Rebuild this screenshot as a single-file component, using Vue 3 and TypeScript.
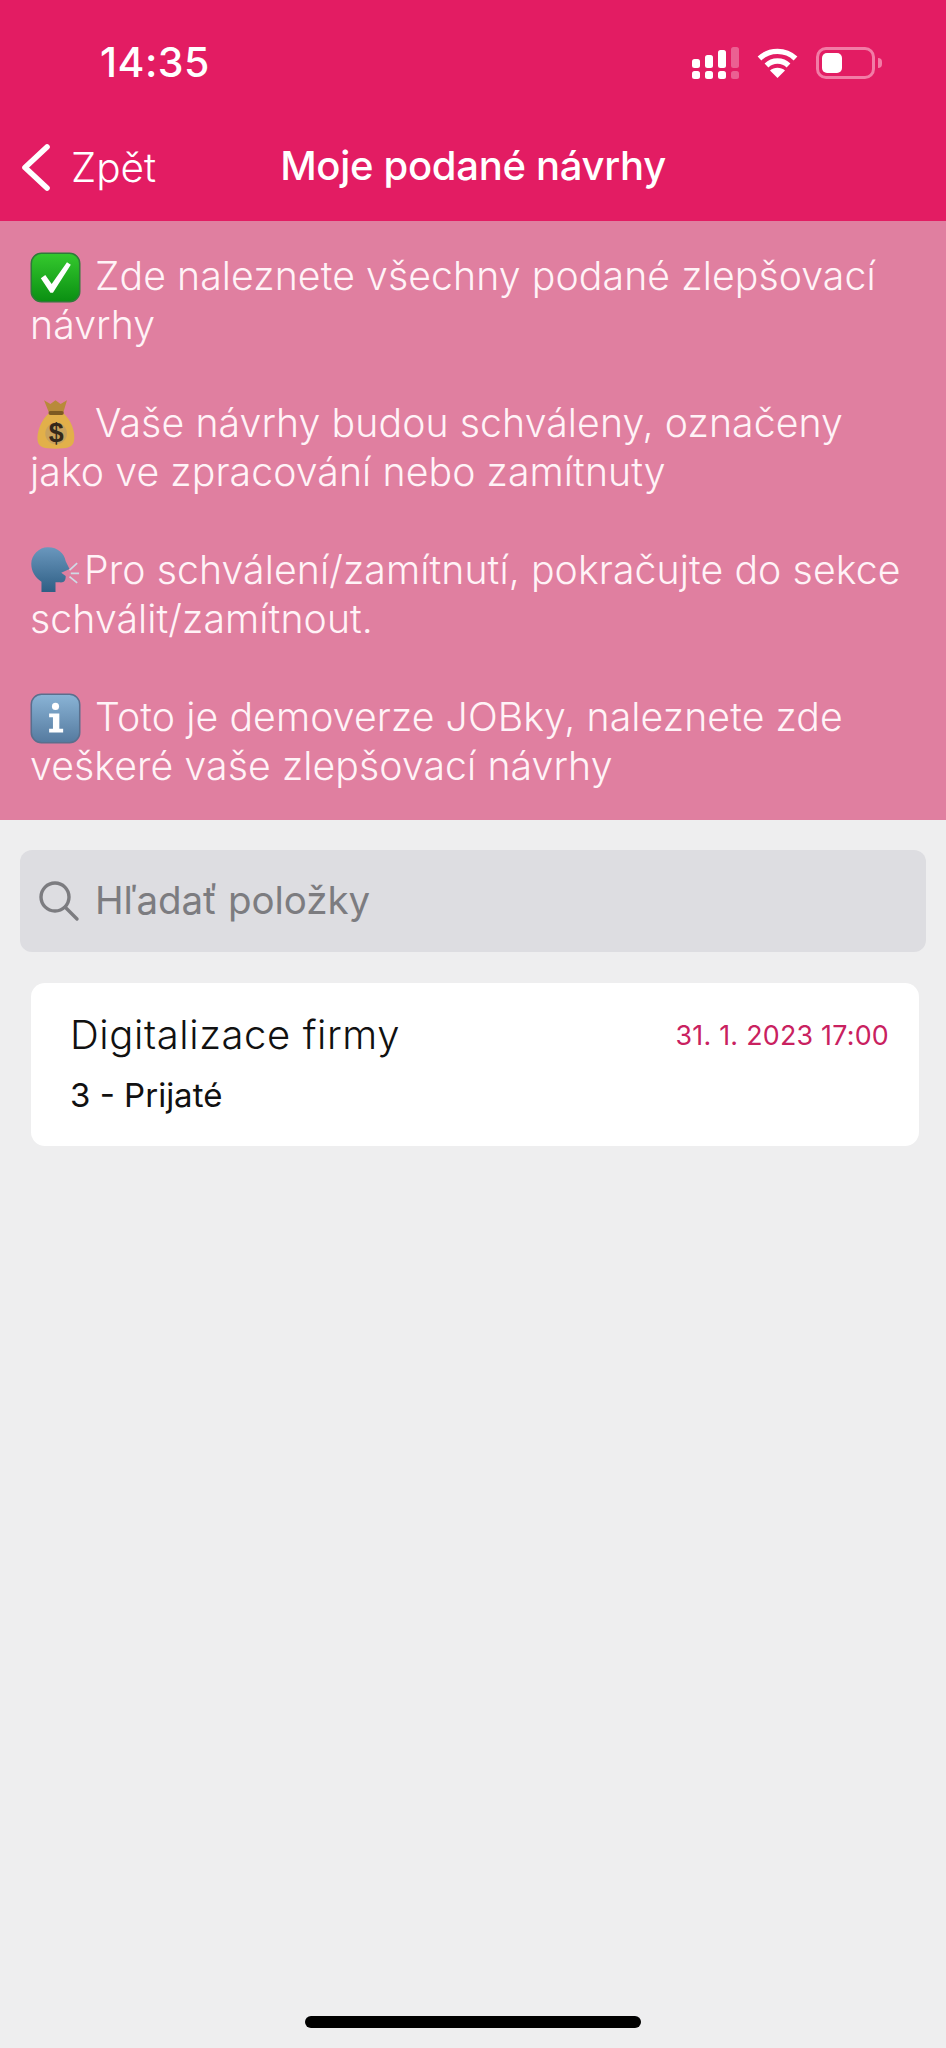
<script setup lang="ts">
type Note = {
  id: number
  icon: 'check' | 'money' | 'speak' | 'info'
  gap: boolean
  lines: string[]
}

const notes: Note[] = [
  { id: 1, icon: 'check', gap: true, lines: ['Zde naleznete všechny podané zlepšovací', 'návrhy'] },
  { id: 2, icon: 'money', gap: true, lines: ['Vaše návrhy budou schváleny, označeny', 'jako ve zpracování nebo zamítnuty'] },
  { id: 3, icon: 'speak', gap: false, lines: ['Pro schválení/zamítnutí, pokračujte do sekce', 'schválit/zamítnout.'] },
  { id: 4, icon: 'info', gap: true, lines: ['Toto je demoverze JOBky, naleznete zde', 'veškeré vaše zlepšovací návrhy'] },
]
</script>

<template>
  <div class="page">
    <header class="topbar">
      <div class="status">
        <span class="time">14:35</span>
        <div class="status-icons">
          <svg width="47" height="32" viewBox="0 0 47 32" fill="#fff">
            <rect x="0" y="12" width="8" height="9" rx="2.5" />
            <rect x="13" y="8" width="8" height="13" rx="2.5" />
            <rect x="26" y="3" width="8" height="18" rx="2.5" />
            <rect x="39" y="0" width="8" height="21" rx="2.5" opacity=".3" />
            <rect x="0" y="24" width="8" height="8" rx="2.5" />
            <rect x="13" y="24" width="8" height="8" rx="2.5" />
            <rect x="26" y="24" width="8" height="8" rx="2.5" />
            <rect x="39" y="24" width="8" height="8" rx="2.5" opacity=".3" />
          </svg>
          <svg class="wifi" width="41" height="30" viewBox="0 0 41 30" fill="none" stroke="#fff" stroke-width="5.4">
            <path d="M2.5 10.5C12.5 1 28.5 1 38.5 10.5" />
            <path d="M9.5 17.5C15.5 11.5 25.5 11.5 31.5 17.5" />
            <path d="M20.5 30L13 22.5C17 18.7 24 18.7 28 22.5Z" fill="#fff" stroke="none" />
          </svg>
          <div class="battery">
            <div class="battery-fill"></div>
          </div>
          <div class="battery-nub"></div>
        </div>
      </div>
      <nav class="navbar">
        <div class="back">
          <svg width="30" height="47" viewBox="0 0 30 47" fill="none" stroke="#fff" stroke-width="5.6" stroke-linecap="round" stroke-linejoin="round">
            <path d="M26 3L4 23.5L26 44" />
          </svg>
          <span>Zpět</span>
        </div>
        <h1 class="title">Moje podané návrhy</h1>
      </nav>
    </header>

    <section class="notice">
      <p v-for="note in notes" :key="note.id" class="note">
        <svg v-if="note.icon === 'check'" class="emoji" viewBox="0 0 40 40">
          <defs>
            <linearGradient id="grn" x1="0" y1="0" x2="0" y2="1">
              <stop offset="0" stop-color="#35c92e" />
              <stop offset="1" stop-color="#0a8f12" />
            </linearGradient>
          </defs>
          <rect x="1" y="1" width="38" height="38" rx="8" fill="url(#grn)" stroke="#2f7a39" stroke-width="1.2" />
          <path d="M8.500 20.500L12 18L17 25L29 8L32 10L18 32H16Z" fill="#fff" />
        </svg>
        <svg v-else-if="note.icon === 'money'" class="emoji" viewBox="0 0 40 40">
          <path d="M11 1L16 4L20 1L24 4L29 1L26 11H15Z" fill="#b88a3a" />
          <path d="M15 11H26C32 16 36 26 34.500 33C33.500 38 29 39 20 39C11 39 7 38 6 33C5 26 9 16 15 11Z" fill="#e2b04a" />
          <rect x="14.500" y="9.500" width="12" height="3" rx="1.500" fill="#7d5a22" />
          <circle cx="20.500" cy="27" r="8.500" fill="#c9a25c" />
          <text x="20.500" y="34" class="dollar">$</text>
        </svg>
        <svg v-else-if="note.icon === 'speak'" class="emoji speak" viewBox="0 0 40 40">
          <defs>
            <linearGradient id="head" x1="0" y1="0" x2="0" y2="1">
              <stop offset="0" stop-color="#6a97bd" />
              <stop offset="1" stop-color="#2f5f85" />
            </linearGradient>
          </defs>
          <path d="M14 1C22 1 27 6 28 12L31 18L28 19.500L24.500 21L28 23.500C28 27 27 29 23 28.500H20V36H9V28C4 25 1 20 1 14C1 7 7 1 14 1Z" fill="url(#head)" />
          <path d="M31 19L37 13.500M32 21.500H38.500M31 24L37 29" stroke="#cfdbe6" stroke-width="1.300" fill="none" />
        </svg>
        <svg v-else class="emoji" viewBox="0 0 40 40">
          <defs>
            <linearGradient id="blue" x1="0" y1="0" x2="0" y2="1">
              <stop offset="0" stop-color="#8ab4d6" />
              <stop offset="1" stop-color="#557a9f" />
            </linearGradient>
          </defs>
          <rect x="1" y="1" width="38" height="38" rx="8" fill="url(#blue)" stroke="#5a6f8d" stroke-width="1.200" />
          <circle cx="20" cy="10.500" r="2.800" fill="#fff" />
          <path d="M15 16H23V28H26V31H15V28H18V19H15Z" fill="#fff" />
        </svg>
        <span v-if="note.gap" class="emoji-gap"> </span>{{ note.lines[0] }}<br />{{ note.lines[1] }}
      </p>
    </section>

    <main class="content">
      <div class="search">
        <svg width="42" height="42" viewBox="0 0 42 42" fill="none" stroke="#7c7c80" stroke-width="3.400" stroke-linecap="round">
          <circle cx="17" cy="17" r="14" />
          <path d="M27.500 27.500L39 39" />
        </svg>
        <span class="search-text">Hľadať položky</span>
      </div>

      <article class="card">
        <div class="card-main">
          <p class="card-title">Digitalizace firmy</p>
          <p class="card-status">3 - Prijaté</p>
        </div>
        <span class="card-date">31. 1. 2023 17:00</span>
      </article>
    </main>

    <div class="home-bar"></div>
  </div>
</template>

<style scoped>
.page {
  width: 946px;
  height: 2048px;
  background: #eeeeef;
  display: flex;
  flex-direction: column;
  font-family: Inter, "Noto Sans", sans-serif;
  overflow: hidden;
}

.topbar {
  height: 221px;
  background: #e31c63;
  color: #fff;
}

.status {
  height: 126px;
  display: flex;
  justify-content: space-between;
  align-items: flex-start;
  padding: 40px 64px 0 100px;
  box-sizing: border-box;
}

.time {
  font-size: 41px;
  line-height: 44px;
  font-weight: 500;
  letter-spacing: 0.5px;
}

.status-icons {
  display: flex;
  align-items: flex-start;
  margin-top: 7px;
}

.wifi {
  margin-left: 18px;
  margin-top: 1px;
}

.battery {
  width: 59px;
  height: 32px;
  margin-left: 18px;
  border: 3px solid #f27ca6;
  border-radius: 10px;
  box-sizing: border-box;
  padding: 3px;
}

.battery-fill {
  width: 20px;
  height: 100%;
  background: #fff;
  border-radius: 5px;
}

.battery-nub {
  width: 4px;
  height: 10px;
  margin: 11px 0 0 3px;
  background: #f27ca6;
  border-radius: 0 4px 4px 0;
}

.navbar {
  height: 79px;
  position: relative;
  display: flex;
  align-items: center;
  justify-content: center;
}

.back {
  position: absolute;
  left: 21px;
  top: 17px;
  display: flex;
  align-items: center;
  gap: 20px;
  font-size: 40.5px;
  font-weight: 300;
  color: #fff;
}

.title {
  margin: 0;
  font-size: 40px;
  font-weight: 500;
  letter-spacing: -0.3px;
}

.notice {
  height: 599px;
  box-sizing: border-box;
  padding: 30px 20px 0 30px;
  background: #e07fa0;
  color: #fff3f7;
  display: flex;
  flex-direction: column;
  gap: 49px;
}

.note {
  margin: 0;
  font-size: 39.2px;
  line-height: 49px;
  font-weight: 300;
  letter-spacing: 0.1px;
  white-space: nowrap;
}

.emoji {
  width: 51px;
  height: 51px;
  margin: -10px 0;
  vertical-align: -3px;
}

.speak {
  margin-right: 3px;
}

.emoji-gap {
  display: inline-block;
  width: 14px;
}

.dollar {
  font-family: "Liberation Sans", sans-serif;
  font-size: 21px;
  font-weight: 700;
  text-anchor: middle;
  fill: #33281a;
}

.content {
  flex: 1;
  padding: 30px 20px 0;
}

.search {
  height: 102px;
  background: #dddde1;
  border-radius: 12px;
  display: flex;
  align-items: center;
  gap: 15px;
  padding-left: 18px;
  box-sizing: border-box;
}

.search-text {
  font-size: 38.5px;
  line-height: 46px;
  margin-top: -2px;
  color: #7c7c80;
  letter-spacing: -0.1px;
}

.card {
  margin: 31px 7px 0 11px;
  height: 163px;
  background: #fff;
  border-radius: 14px;
  display: flex;
  justify-content: space-between;
  padding: 27px 30px 0 39px;
  box-sizing: border-box;
}

.card-title {
  margin: 0;
  font-size: 40px;
  line-height: 50px;
  font-weight: 300;
  letter-spacing: 0.6px;
  color: #111;
}

.card-status {
  margin: 16px 0 0;
  font-size: 33px;
  line-height: 38px;
  font-weight: 400;
  color: #111;
}

.card-date {
  font-size: 26.8px;
  line-height: 50px;
  letter-spacing: 0.25px;
  color: #c9215f;
}

.home-bar {
  width: 336px;
  height: 12px;
  margin: 0 auto 20px;
  background: #000;
  border-radius: 6px;
}
</style>
